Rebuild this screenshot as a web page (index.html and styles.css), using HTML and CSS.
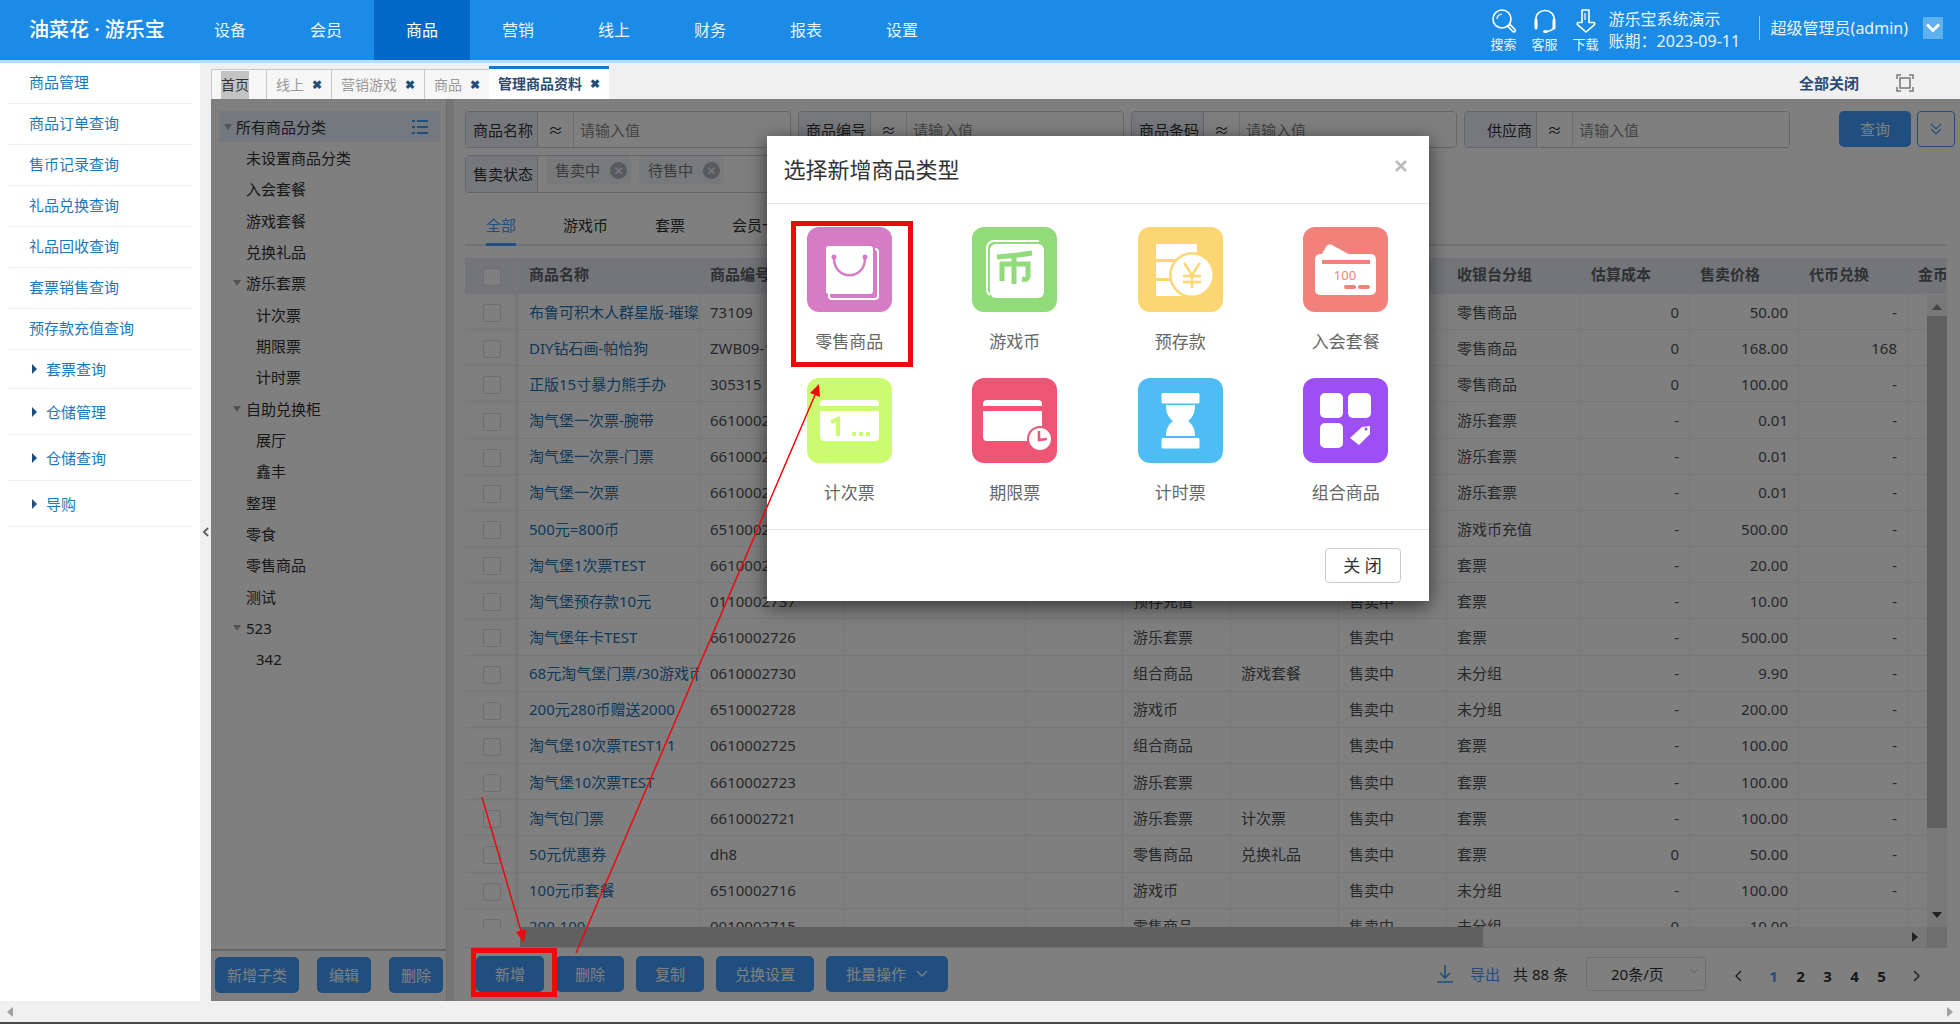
FILE: index.html
```html
<!DOCTYPE html>
<html lang="zh-CN">
<head>
<meta charset="utf-8">
<title>油菜花 · 游乐宝</title>
<link rel="stylesheet" href="styles.css">
</head>
<body>
<header class="topbar">
  <div class="logo">油菜花 · 游乐宝</div>
  <nav class="mainnav">
    <a href="#">设备</a><a href="#">会员</a><a href="#" class="on">商品</a><a href="#">营销</a><a href="#">线上</a><a href="#">财务</a><a href="#">报表</a><a href="#">设置</a>
  </nav>
  <div class="tools">
    <a href="#" class="tool"><svg width="26" height="26" viewBox="0 0 26 26" fill="none" stroke="#fff" stroke-width="1.6"><circle cx="11" cy="11" r="9"/><path d="M6 11a5 5 0 0 1 5-5" stroke-width="1.2"/><path d="M17 18.500l2-2 5 5a1.500 1.500 0 0 1-2 2.200z"/></svg>搜索</a>
    <a href="#" class="tool"><svg width="26" height="26" viewBox="0 0 26 26" fill="none" stroke="#fff" stroke-width="1.600"><path d="M4 13C3 6 8 2.500 13 2.500S23 6 22 13"/><path d="M4 12v8M22 12v8" stroke-width="3" stroke-linecap="round"/><path d="M22 19c-1 3-4 4-7 4.500"/><ellipse cx="13.500" cy="23.500" rx="2.500" ry="1.500" fill="#fff" stroke="none"/></svg>客服</a>
    <a href="#" class="tool"><svg width="26" height="26" viewBox="0 0 26 26" fill="none" stroke="#fff" stroke-width="1.600" stroke-linejoin="round"><path d="M9 2h7v12.500h4.500c1.500 0 1.500 1.500.8 2.300L13 24l-8.300-7.200c-.8-.8-.7-2.300.8-2.300H9z"/><path d="M12 5v7" stroke-width="1.200"/></svg>下载</a>
  </div>
  <div class="shop"><span>游乐宝系统演示</span><span>账期：2023-09-11</span></div>
  <div class="user">超级管理员(admin)</div>
  <button class="usermenu" aria-label="用户菜单"><svg width="14" height="10" viewBox="0 0 14 10" fill="none" stroke="#fff" stroke-width="3"><path d="M1 1.500l6 6 6-6"/></svg></button>
</header>

<div class="shell">
  <aside class="side">
    <a href="#">商品管理</a>
    <a href="#">商品订单查询</a>
    <a href="#">售币记录查询</a>
    <a href="#">礼品兑换查询</a>
    <a href="#">礼品回收查询</a>
    <a href="#">套票销售查询</a>
    <a href="#">预存款充值查询</a>
    <a href="#" class="grp first">套票查询</a>
    <a href="#" class="grp">仓储管理</a>
    <a href="#" class="grp">仓储查询</a>
    <a href="#" class="grp">导购</a>
  </aside>
  <button class="fold" aria-label="收起菜单"><svg width="8" height="10" viewBox="0 0 8 10" fill="none" stroke="#666" stroke-width="2"><path d="M6 1L2 5l4 4"/></svg></button>

  <main class="work">
    <div class="tabs">
      <a href="#" class="tab home"><mark>首页</mark></a>
      <a href="#" class="tab">线上 <b>✖</b></a>
      <a href="#" class="tab">营销游戏 <b>✖</b></a>
      <a href="#" class="tab">商品 <b>✖</b></a>
      <a href="#" class="tab cur">管理商品资料 <b>✖</b></a>
      <a href="#" class="closeall">全部关闭</a>
      <button class="full" aria-label="全屏"><svg width="18" height="18" viewBox="0 0 18 18" fill="none" stroke="#777" stroke-width="1.500"><rect x="4" y="4" width="10" height="10"/><path d="M1 5V1h4M13 1h4v4M17 13v4h-4M5 17H1v-4"/></svg></button>
    </div>

    <div class="frame">
      <section class="cats">
        <ul class="tree">
          <li class="root open">所有商品分类<svg width="16" height="16" viewBox="0 0 16 16" stroke="#409eff" stroke-width="2"><path d="M0 2h3M5 2h11M0 8h3M5 8h11M0 14h3M5 14h11"/></svg></li>
          <li class="l1">未设置商品分类</li>
          <li class="l1">入会套餐</li>
          <li class="l1">游戏套餐</li>
          <li class="l1">兑换礼品</li>
          <li class="l1 open">游乐套票</li>
          <li class="l2">计次票</li>
          <li class="l2">期限票</li>
          <li class="l2">计时票</li>
          <li class="l1 open">自助兑换柜</li>
          <li class="l2">展厅</li>
          <li class="l2">鑫丰</li>
          <li class="l1">整理</li>
          <li class="l1">零食</li>
          <li class="l1">零售商品</li>
          <li class="l1">测试</li>
          <li class="l1 open">523</li>
          <li class="l2">342</li>
        </ul>
        <div class="catbtns"><button class="btn">新增子类</button><button class="btn">编辑</button><button class="btn">删除</button></div>
      </section>
      <div class="split"></div>

      <section class="list">
        <form class="filters">
          <div class="field"><label for="f1">商品名称</label><i>≈</i><input id="f1" placeholder="请输入值"></div>
          <div class="field"><label for="f2">商品编号</label><i>≈</i><input id="f2" placeholder="请输入值"></div>
          <div class="field"><label for="f3">商品条码</label><i>≈</i><input id="f3" placeholder="请输入值"></div>
          <div class="field"><label for="f4">供应商</label><i>≈</i><input id="f4" placeholder="请输入值"></div>
          <div class="go">
            <button type="button" class="btn query">查询</button>
            <button type="button" class="more" aria-label="展开"><svg width="12" height="12" viewBox="0 0 12 12" fill="none" stroke="#409eff" stroke-width="1.200"><path d="M1 1l5 5 5-5M1 6l5 5 5-5"/></svg></button>
          </div>
          <div class="field state"><span class="lab">售卖状态</span><span class="chip">售卖中<em>×</em></span><span class="chip">待售中<em>×</em></span></div>
        </form>
        <div class="types"><a href="#" class="on">全部</a><a href="#">游戏币</a><a href="#">套票</a><a href="#">会员卡</a></div>

        <div class="grid">
          <div class="view">
          <table>
            <colgroup><col class="c54"><col class="c181"><col class="c145"><col class="c181"><col class="c97"><col class="c108"><col class="c108"><col class="c108"><col class="c134"><col class="c109"><col class="c109"><col class="c109"><col></colgroup>
            <thead><tr><th class="ck"><input type="checkbox" aria-label="全选"></th><th>商品名称</th><th>商品编号</th><th></th><th></th><th>商品类型</th><th>商品分类</th><th>售卖状态</th><th>收银台分组</th><th>估算成本</th><th>售卖价格</th><th>代币兑换</th><th>金币</th></tr></thead>
            <tbody>
            <tr><td class="ck"><input type="checkbox" aria-label="选择"></td><td><a href="#">布鲁可积木人群星版-璀璨钻</a></td><td>73109</td><td></td><td></td><td>零售商品</td><td></td><td>售卖中</td><td>零售商品</td><td>0</td><td>50.00</td><td>-</td><td></td></tr>
            <tr><td class="ck"><input type="checkbox" aria-label="选择"></td><td><a href="#">DIY钻石画-帕恰狗</a></td><td>ZWB09-1</td><td></td><td></td><td>零售商品</td><td></td><td>售卖中</td><td>零售商品</td><td>0</td><td>168.00</td><td>168</td><td></td></tr>
            <tr><td class="ck"><input type="checkbox" aria-label="选择"></td><td><a href="#">正版15寸暴力熊手办</a></td><td>305315</td><td></td><td></td><td>零售商品</td><td></td><td>售卖中</td><td>零售商品</td><td>0</td><td>100.00</td><td>-</td><td></td></tr>
            <tr><td class="ck"><input type="checkbox" aria-label="选择"></td><td><a href="#">淘气堡一次票-腕带</a></td><td>6610002</td><td></td><td></td><td>游乐套票</td><td></td><td>售卖中</td><td>游乐套票</td><td>-</td><td>0.01</td><td>-</td><td></td></tr>
            <tr><td class="ck"><input type="checkbox" aria-label="选择"></td><td><a href="#">淘气堡一次票-门票</a></td><td>6610002</td><td></td><td></td><td>游乐套票</td><td></td><td>售卖中</td><td>游乐套票</td><td>-</td><td>0.01</td><td>-</td><td></td></tr>
            <tr><td class="ck"><input type="checkbox" aria-label="选择"></td><td><a href="#">淘气堡一次票</a></td><td>6610002</td><td></td><td></td><td>游乐套票</td><td></td><td>售卖中</td><td>游乐套票</td><td>-</td><td>0.01</td><td>-</td><td></td></tr>
            <tr><td class="ck"><input type="checkbox" aria-label="选择"></td><td><a href="#">500元=800币</a></td><td>6510002</td><td></td><td></td><td>游戏币</td><td></td><td>售卖中</td><td>游戏币充值</td><td>-</td><td>500.00</td><td>-</td><td></td></tr>
            <tr><td class="ck"><input type="checkbox" aria-label="选择"></td><td><a href="#">淘气堡1次票TEST</a></td><td>6610002</td><td></td><td></td><td>游乐套票</td><td></td><td>售卖中</td><td>套票</td><td>-</td><td>20.00</td><td>-</td><td></td></tr>
            <tr><td class="ck"><input type="checkbox" aria-label="选择"></td><td><a href="#">淘气堡预存款10元</a></td><td>0110002737</td><td></td><td></td><td>预存充值</td><td></td><td>售卖中</td><td>套票</td><td>-</td><td>10.00</td><td>-</td><td></td></tr>
            <tr><td class="ck"><input type="checkbox" aria-label="选择"></td><td><a href="#">淘气堡年卡TEST</a></td><td>6610002726</td><td></td><td></td><td>游乐套票</td><td></td><td>售卖中</td><td>套票</td><td>-</td><td>500.00</td><td>-</td><td></td></tr>
            <tr><td class="ck"><input type="checkbox" aria-label="选择"></td><td><a href="#">68元淘气堡门票/30游戏币</a></td><td>0610002730</td><td></td><td></td><td>组合商品</td><td>游戏套餐</td><td>售卖中</td><td>未分组</td><td>-</td><td>9.90</td><td>-</td><td></td></tr>
            <tr><td class="ck"><input type="checkbox" aria-label="选择"></td><td><a href="#">200元280币赠送2000</a></td><td>6510002728</td><td></td><td></td><td>游戏币</td><td></td><td>售卖中</td><td>未分组</td><td>-</td><td>200.00</td><td>-</td><td></td></tr>
            <tr><td class="ck"><input type="checkbox" aria-label="选择"></td><td><a href="#">淘气堡10次票TEST1 1</a></td><td>0610002725</td><td></td><td></td><td>组合商品</td><td></td><td>售卖中</td><td>套票</td><td>-</td><td>100.00</td><td>-</td><td></td></tr>
            <tr><td class="ck"><input type="checkbox" aria-label="选择"></td><td><a href="#">淘气堡10次票TEST</a></td><td>6610002723</td><td></td><td></td><td>游乐套票</td><td></td><td>售卖中</td><td>套票</td><td>-</td><td>100.00</td><td>-</td><td></td></tr>
            <tr><td class="ck"><input type="checkbox" aria-label="选择"></td><td><a href="#">淘气包门票</a></td><td>6610002721</td><td></td><td></td><td>游乐套票</td><td>计次票</td><td>售卖中</td><td>套票</td><td>-</td><td>100.00</td><td>-</td><td></td></tr>
            <tr><td class="ck"><input type="checkbox" aria-label="选择"></td><td><a href="#">50元优惠券</a></td><td>dh8</td><td></td><td></td><td>零售商品</td><td>兑换礼品</td><td>售卖中</td><td>套票</td><td>0</td><td>50.00</td><td>-</td><td></td></tr>
            <tr><td class="ck"><input type="checkbox" aria-label="选择"></td><td><a href="#">100元币套餐</a></td><td>6510002716</td><td></td><td></td><td>游戏币</td><td></td><td>售卖中</td><td>未分组</td><td>-</td><td>100.00</td><td>-</td><td></td></tr>
            <tr><td class="ck"><input type="checkbox" aria-label="选择"></td><td><a href="#">200-100</a></td><td>0010002715</td><td></td><td></td><td>零售商品</td><td></td><td>售卖中</td><td>未分组</td><td>0</td><td>10.00</td><td>-</td><td></td></tr>
            </tbody>
          </table>
          </div>
          <div class="vbar"><span class="tri up"></span><span class="vthumb"></span><span class="tri down"></span></div>
          <div class="hbar"><span class="hgap"></span><span class="hthumb"></span><span class="tri right"></span><span class="corner"></span></div>
        </div>

        <div class="actions">
          <button class="btn">新增</button><button class="btn">删除</button><button class="btn">复制</button><button class="btn">兑换设置</button><button class="btn batch">批量操作<svg width="12" height="8" viewBox="0 0 12 8" fill="none" stroke="#fff" stroke-width="1.300"><path d="M1 1l5 5 5-5"/></svg></button>
          <a href="#" class="export"><svg width="16" height="18" viewBox="0 0 16 18" fill="none" stroke="#409eff" stroke-width="1.600"><path d="M8 0v13M3 8l5 5 5-5M0 17h16"/></svg>导出</a>
          <span class="total">共 88 条</span>
          <select class="size" aria-label="每页条数"><option>20条/页</option></select>
          <nav class="pages"><a href="#" aria-label="上一页"><svg width="8" height="12" viewBox="0 0 8 12" fill="none" stroke="#303133" stroke-width="1.300"><path d="M7 1L2 6l5 5"/></svg></a><a href="#" class="on">1</a><a href="#">2</a><a href="#">3</a><a href="#">4</a><a href="#">5</a><a href="#" aria-label="下一页"><svg width="8" height="12" viewBox="0 0 8 12" fill="none" stroke="#303133" stroke-width="1.300"><path d="M1 1l5 5-5 5"/></svg></a></nav>
        </div>
      </section>

      <div class="mask">
        <div class="modal" role="dialog" aria-label="选择新增商品类型">
          <div class="mhead"><h2>选择新增商品类型</h2><button class="x" aria-label="关闭窗口"><svg width="12" height="12" viewBox="0 0 12 12" stroke="#bbb" stroke-width="2.500"><path d="M1 1l10 10M11 1L1 11"/></svg></button></div>
          <div class="mbody">
            <a href="#" class="kind"><svg viewBox="0 0 85 85"><rect width="85" height="85" rx="12" fill="#d57cc4"/><path d="M22 66v3a3 3 0 0 0 3 3h43a3 3 0 0 0 3-3V25a3 3 0 0 0-3-3" fill="none" stroke="#fff" stroke-width="2"/><rect x="19" y="19" width="47" height="48" rx="3" fill="#fff"/><path d="M27 31c0 23 31 23 31 0" fill="none" stroke="#d57cc4" stroke-width="2.500"/><circle cx="27" cy="30" r="2.500" fill="#d57cc4"/><circle cx="58" cy="30" r="2.500" fill="#d57cc4"/></svg>零售商品</a>
            <a href="#" class="kind"><svg viewBox="0 0 85 85"><rect width="85" height="85" rx="12" fill="#91db7a"/><path d="M67 14H22a7 7 0 0 0-7 7v42a6 6 0 0 0 3 5" fill="none" stroke="#fff" stroke-width="2"/><rect x="18" y="17" width="54" height="54" rx="6" fill="#fff"/><path d="M25 30c12-1 23-2 35-4M42 29v28M30 54V37h26v12c0 3-2 4-6 3" fill="none" stroke="#91db7a" stroke-width="5"/></svg>游戏币</a>
            <a href="#" class="kind"><svg viewBox="0 0 85 85"><rect width="85" height="85" rx="12" fill="#fbd672"/><path d="M18 17h41v15H18zM18 35h30v16H18zM18 54h30v15H18z" fill="#fff"/><circle cx="54" cy="48" r="23" fill="#fbd672"/><circle cx="54" cy="48" r="20.500" fill="#fff"/><path d="M46 36l8 12 8-12M54 48v13M45 49h18M45 55h18" fill="none" stroke="#fbd672" stroke-width="2.500"/></svg>预存款</a>
            <a href="#" class="kind"><svg viewBox="0 0 85 85"><rect width="85" height="85" rx="12" fill="#f2817c"/><path d="M17 30l6-10c1-2 3-3 6-2l22 12z" fill="#fff"/><rect x="12" y="27" width="61" height="41" rx="5" fill="#fff"/><path d="M19 35h48" stroke="#f2817c" stroke-width="4"/><path d="M43 60h8M57 60h8" stroke="#e8857c" stroke-width="4" stroke-linecap="round"/><text x="42" y="53" text-anchor="middle" font-size="13" fill="#f2817c">100</text></svg>入会套餐</a>
            <a href="#" class="kind"><svg viewBox="0 0 85 85"><rect width="85" height="85" rx="12" fill="#cbfb6f"/><path d="M13 28v-2a4 4 0 0 1 4-4h51a4 4 0 0 1 4 4v2zM13 33h59v26a4 4 0 0 1-4 4H17a4 4 0 0 1-4-4z" fill="#fff"/><path d="M24 44l7-3v17" fill="none" stroke="#cbfb6f" stroke-width="4"/><path d="M45 56h4M52 56h4M59 56h4" stroke="#cbfb6f" stroke-width="4"/></svg>计次票</a>
            <a href="#" class="kind"><svg viewBox="0 0 85 85"><rect width="85" height="85" rx="12" fill="#ee5575"/><path d="M11 28v-2a4 4 0 0 1 4-4h51a4 4 0 0 1 4 4v2zM11 33h59v26a4 4 0 0 1-4 4H15a4 4 0 0 1-4-4z" fill="#fff"/><circle cx="68" cy="61" r="13" fill="#ee5575"/><circle cx="68" cy="61" r="11" fill="#fff"/><path d="M67 53v9l8-1" fill="none" stroke="#ee5575" stroke-width="2.500"/></svg>期限票</a>
            <a href="#" class="kind"><svg viewBox="0 0 85 85"><rect width="85" height="85" rx="12" fill="#4ebdf6"/><path d="M25 15h35a1.500 1.500 0 0 1 1.500 1.500V24a1.500 1.500 0 0 1-1.500 1.500H25a1.500 1.500 0 0 1-1.500-1.500v-7.500A1.500 1.500 0 0 1 25 15zM25 60h35a1.500 1.500 0 0 1 1.500 1.500V69a1.500 1.500 0 0 1-1.500 1.500H25a1.500 1.500 0 0 1-1.500-1.500v-7.500A1.500 1.500 0 0 1 25 60zM28 27h29c0 8-2 12-7 16 5 4 7 8 7 15H28c0-7 2-11 7-15-5-4-7-8-7-16z" fill="#fff"/></svg>计时票</a>
            <a href="#" class="kind"><svg viewBox="0 0 85 85"><rect width="85" height="85" rx="12" fill="#9d4ef5"/><g fill="#fff"><rect x="17" y="15" width="23" height="25" rx="5"/><rect x="45" y="15" width="23" height="25" rx="5"/><rect x="17" y="45" width="23" height="25" rx="5"/><path d="M47 60l12-11 8-1v8L56 67z"/></g><circle cx="63" cy="51" r="1.500" fill="#9d4ef5"/></svg>组合商品</a>
          </div>
          <div class="mfoot"><button class="close">关 闭</button></div>
        </div>
      </div>
    </div>
  </main>
</div>
<div class="winbar"><span class="tri left"></span><span class="tri right"></span></div>

<svg class="notes" width="1960" height="1024" viewBox="0 0 1960 1024" fill="none" stroke="#ee0a0a">
  <rect x="793.500" y="223.500" width="117" height="141" stroke-width="5"/>
  <rect x="473.500" y="950.500" width="81" height="44" stroke-width="5"/>
  <path d="M482 797l39 134M576 953l239-558" stroke-width="1.500"/>
  <path d="M524 943l-8-11 10-3zM819 384l1 13-10-4z" fill="#ee0a0a" stroke="none"/>
</svg>
</body>
</html>
```
FILE: styles.css
```css
* { box-sizing: border-box; }
body {
  margin: 0;
  height: 100vh;
  display: flex;
  flex-direction: column;
  position: relative;
  overflow: hidden;
  background: #f0f0f0;
  color: #303133;
  font: 15px/20px "Noto Sans", "Noto Sans CJK SC", sans-serif;
}
a { color: inherit; text-decoration: none; }
button, input, select { font: inherit; color: inherit; margin: 0; }
button { padding: 0; border: 0; background: none; cursor: pointer; }
svg { display: block; flex: none; }

/* top bar */
.topbar { flex: none; height: 63px; border-bottom: 3px solid #b5dcfa; display: flex; align-items: center; background: #1c8be5; color: #e6f4ff; }
.logo { width: 182px; padding-left: 29px; font-size: 20px; font-weight: 500; color: #fff; white-space: nowrap; }
.mainnav { display: flex; flex: 1; align-self: stretch; font-size: 16px; }
.mainnav a { width: 96px; display: flex; align-items: center; justify-content: center; }
.mainnav .on { background: #0069c7; color: #fff; }
.tools { display: flex; gap: 15px; font-size: 13px; line-height: 16px; }
.tool { display: flex; flex-direction: column; align-items: center; gap: 2px; }
.shop { display: flex; flex-direction: column; margin-left: 10px; font-size: 16px; line-height: 22px; width: 150px; }
.user { border-left: 1px solid #8fc8f7; padding-left: 11px; font-size: 16px; line-height: 24px; margin-bottom: 4px; }
.usermenu { width: 20px; height: 22px; margin: 0 17px 4px 15px; background: #5fb0ef; display: grid; place-items: center; }

/* shell */
.shell { flex: 1; min-height: 0; display: flex; }
.side { width: 200px; background: #fff; padding: 0 8px; color: #1a78bd; }
.side a { display: flex; align-items: center; height: 41px; padding: 0 0 2px 21px; border-bottom: 1px solid #f1f1f1; }
.side .grp { height: 46px; padding: 0 0 0 24px; gap: 9px; }
.side .first { height: 39px; }
.grp::before { content: ""; border: 5px solid transparent; border-left-color: #1d4f7d; border-right: 0; }
.fold { width: 11px; display: grid; place-items: center; }
.work { flex: 1; min-width: 0; display: flex; flex-direction: column; }
.tabs { flex: none; height: 36px; padding-top: 3px; display: flex; align-items: flex-end; }
.tab { height: 30px; padding: 0 9px; border: 1px solid #c8c8c8; border-right: 0; border-bottom: 0; background: #f6f6f6; color: #999; display: flex; align-items: center; gap: 8px; font-size: 14px; }
.tab b { color: #1f4e79; font-size: 12px; }
.home { padding-right: 17px; }
.home mark { background: #c3c3c3; color: #333; line-height: 28px; }
.cur { height: 33px; border: 0; border-top: 3px solid #1877c5; background: #fff; color: #2b4b73; font-weight: 600; }
.closeall { margin: 0 37px 6px auto; font-weight: 600; color: #2b4b73; }
.full { margin: 0 46px 7px 0; }

/* content frame */
.frame { flex: 1; min-height: 0; display: flex; position: relative; background: #fff; overflow: hidden; }
.cats { width: 235px; display: flex; flex-direction: column; justify-content: space-between; }
.tree { list-style: none; margin: 12px 6px 0 8px; padding: 0; height: 564px; display: flex; flex-direction: column; }
.tree li { flex: 1; display: flex; align-items: center; padding-left: 27px; }
.tree .l2 { padding-left: 37px; }
.tree .root { background: #e6f2fd; padding: 0 12px 0 5px; }
.root svg { margin-left: auto; }
.tree .open::before { content: ""; border: 4px solid transparent; border-top: 6px solid #a8a8a8; border-bottom: 0; margin-right: 4px; }
.tree .l1.open { padding-left: 14px; }
.tree .l1.open::before { margin-right: 5px; }
.catbtns { height: 52px; padding: 6px 0 0 4px; border-top: 2px solid #ccc; display: flex; align-items: flex-start; gap: 18px; }
.btn { height: 36px; border-radius: 5px; background: #409eff; color: #fff; padding: 0 12px; white-space: nowrap; }
.split { width: 8px; background: #ececec; border-left: 1px solid #ddd; }
.list { flex: 1; min-width: 0; display: flex; flex-direction: column; padding: 12px 13px 0 11px; }
.filters { display: grid; grid-template-columns: repeat(4, 326px) 1fr; gap: 7px; margin-right: -8px; }
.field { height: 37px; display: flex; border: 1px solid #c8cdd6; border-radius: 4px; overflow: hidden; }
.field label, .lab { width: 72px; background: #eef1f7; border-right: 1px solid #c8cdd6; display: flex; align-items: center; justify-content: flex-end; padding-right: 4px; white-space: nowrap; }
.field i { width: 36px; font-style: normal; display: grid; place-items: center; border-right: 1px solid #dcdfe6; }
.field input { flex: 1; min-width: 0; border: 0; padding: 0 6px; background: #fff; }
.field input::placeholder { color: #8a8a8a; opacity: 1; }
.go { display: flex; justify-content: flex-end; gap: 6px; }
.query { width: 72px; }
.more { width: 38px; height: 36px; border: 1px solid #409eff; border-radius: 4px; display: grid; place-items: center; }
.state { grid-column: 1 / span 2; height: 38px; gap: 8px; }
.chip { height: 28px; background: #f0f2f5; border-radius: 4px; padding: 0 4px 0 9px; display: flex; align-items: center; gap: 10px; color: #777; }
.chip em { width: 17px; height: 17px; border-radius: 9px; background: #b0b5c0; color: #fff; font-style: normal; line-height: 16px; text-align: center; }
.types { margin-top: 14px; height: 39px; display: flex; gap: 47px; padding-left: 21px; border-bottom: 2px solid #dfe4ed; }
.types a { height: 39px; line-height: 37px; }
.types .on { color: #409eff; border-bottom: 3px solid #409eff; }

/* product table */
.grid { margin-top: 12px; position: relative; }
.view { height: 669px; overflow: hidden; }
table { width: 100%; height: 687px; table-layout: fixed; border-collapse: separate; border-spacing: 0; }
.c54 { width: 54px; } .c181 { width: 181px; } .c145 { width: 145px; } .c97 { width: 97px; } .c108 { width: 108px; } .c109 { width: 109px; } .c134 { width: 134px; }
th, td { height: 36px; padding: 0 10px; text-align: left; white-space: nowrap; overflow: hidden; border-right: 1px solid #ebeef5; border-bottom: 1px solid #ebeef5; }
th { background: #e7eaf2; color: #606266; font-weight: 600; padding-bottom: 4px; }
th:last-child { padding-right: 0; }
td { color: #505256; }
td a { color: #2272b5; }
td:nth-child(10), td:nth-child(11), td:nth-child(12) { text-align: right; }
.ck { text-align: center; padding: 0; box-shadow: inset -3px 0 3px #eee; }
.ck input { appearance: none; width: 18px; height: 18px; border: 1px solid #d8dce4; border-radius: 2px; background: #fff; vertical-align: middle; }
.tri { width: 0; height: 0; border: 5px solid transparent; }
.up { border-bottom: 6px solid #888; border-top: 0; }
.down { border-top: 6px solid #444; border-bottom: 0; }
.right { border-left: 6px solid #444; border-right: 0; }
.left { border-right: 6px solid #a0a0a0; border-left: 0; }
.vbar { position: absolute; right: 0; top: 37px; bottom: 21px; width: 20px; background: #f1f1f1; display: flex; flex-direction: column; align-items: center; padding: 9px 0; }
.vthumb { width: 20px; height: 512px; margin-top: 6px; background: #c1c1c1; }
.vbar .down { margin-top: auto; }
.hbar { height: 21px; display: flex; align-items: center; background: #f1f1f1; border-bottom: 1px solid #e4e4e4; }
.hgap { width: 55px; align-self: stretch; background: #fff; }
.hthumb { width: 65%; align-self: stretch; background: #c1c1c1; }
.hbar .right { margin-left: auto; margin-right: 9px; }
.corner { width: 20px; align-self: stretch; background: #dcdcdc; }
.actions { display: flex; align-items: center; padding: 8px 0 0 11px; }
.actions .btn { padding: 0 19px; margin-right: 12px; }
.actions .batch { display: flex; align-items: center; gap: 10px; padding: 0 20px; }
.export { margin-left: auto; display: flex; align-items: center; gap: 17px; color: #409eff; }
.total { margin: 0 18px 0 13px; }
.size { appearance: none; width: 120px; height: 34px; border: 1px solid #dcdfe6; border-radius: 4px; padding: 0 24px; background: #fff url("data:image/svg+xml,%3Csvg xmlns='http://www.w3.org/2000/svg' width='10' height='7' fill='none' stroke='%23c0c4cc'%3E%3Cpath d='M1 1l4 4 4-4'/%3E%3C/svg%3E") no-repeat right 6px top 10px; }
.pages { display: flex; align-items: center; margin: 4px 17px 0 18px; font-weight: 700; }
.pages a { width: 27px; display: grid; place-items: center; }
.pages a:first-child { margin-right: 9px; }
.pages a:last-child { margin-left: 8px; }
.pages .on { color: #409eff; }

/* dialog */
.mask { position: absolute; inset: 0; background: rgba(0, 0, 0, .5); display: flex; justify-content: center; align-items: flex-start; padding: 37px 0 0 24px; }
.modal { width: 662px; background: #fff; box-shadow: 0 5px 18px rgba(0, 0, 0, .6); color: #333; }
.mhead { height: 68px; display: flex; justify-content: space-between; padding: 0 22px 0 17px; border-bottom: 1px solid #e5e5e5; }
.mhead h2 { margin: 0; font-size: 22px; font-weight: 400; line-height: 66px; }
.x { height: 60px; }
.mbody { display: grid; grid-template-columns: repeat(4, 1fr); padding-top: 23px; height: 325px; grid-auto-rows: 151px; font-size: 17px; color: #666; }
.kind { display: flex; flex-direction: column; align-items: center; gap: 20px; }
.kind svg { width: 85px; height: 85px; }
.mfoot { height: 72px; border-top: 1px solid #e5e5e5; display: flex; justify-content: flex-end; align-items: center; padding-right: 28px; }
.close { width: 76px; height: 35px; border: 1px solid #ccc; border-radius: 4px; font-size: 17px; background: #fff; }

/* window scroll bar */
.winbar { flex: none; height: 23px; display: flex; justify-content: space-between; align-items: center; padding: 0 7px; border-bottom: 2px solid #4a4a4a; background: #f0f0f0; }
.winbar .right { border-left-color: #a0a0a0; }

.notes { position: absolute; left: 0; top: 0; pointer-events: none; }
```
